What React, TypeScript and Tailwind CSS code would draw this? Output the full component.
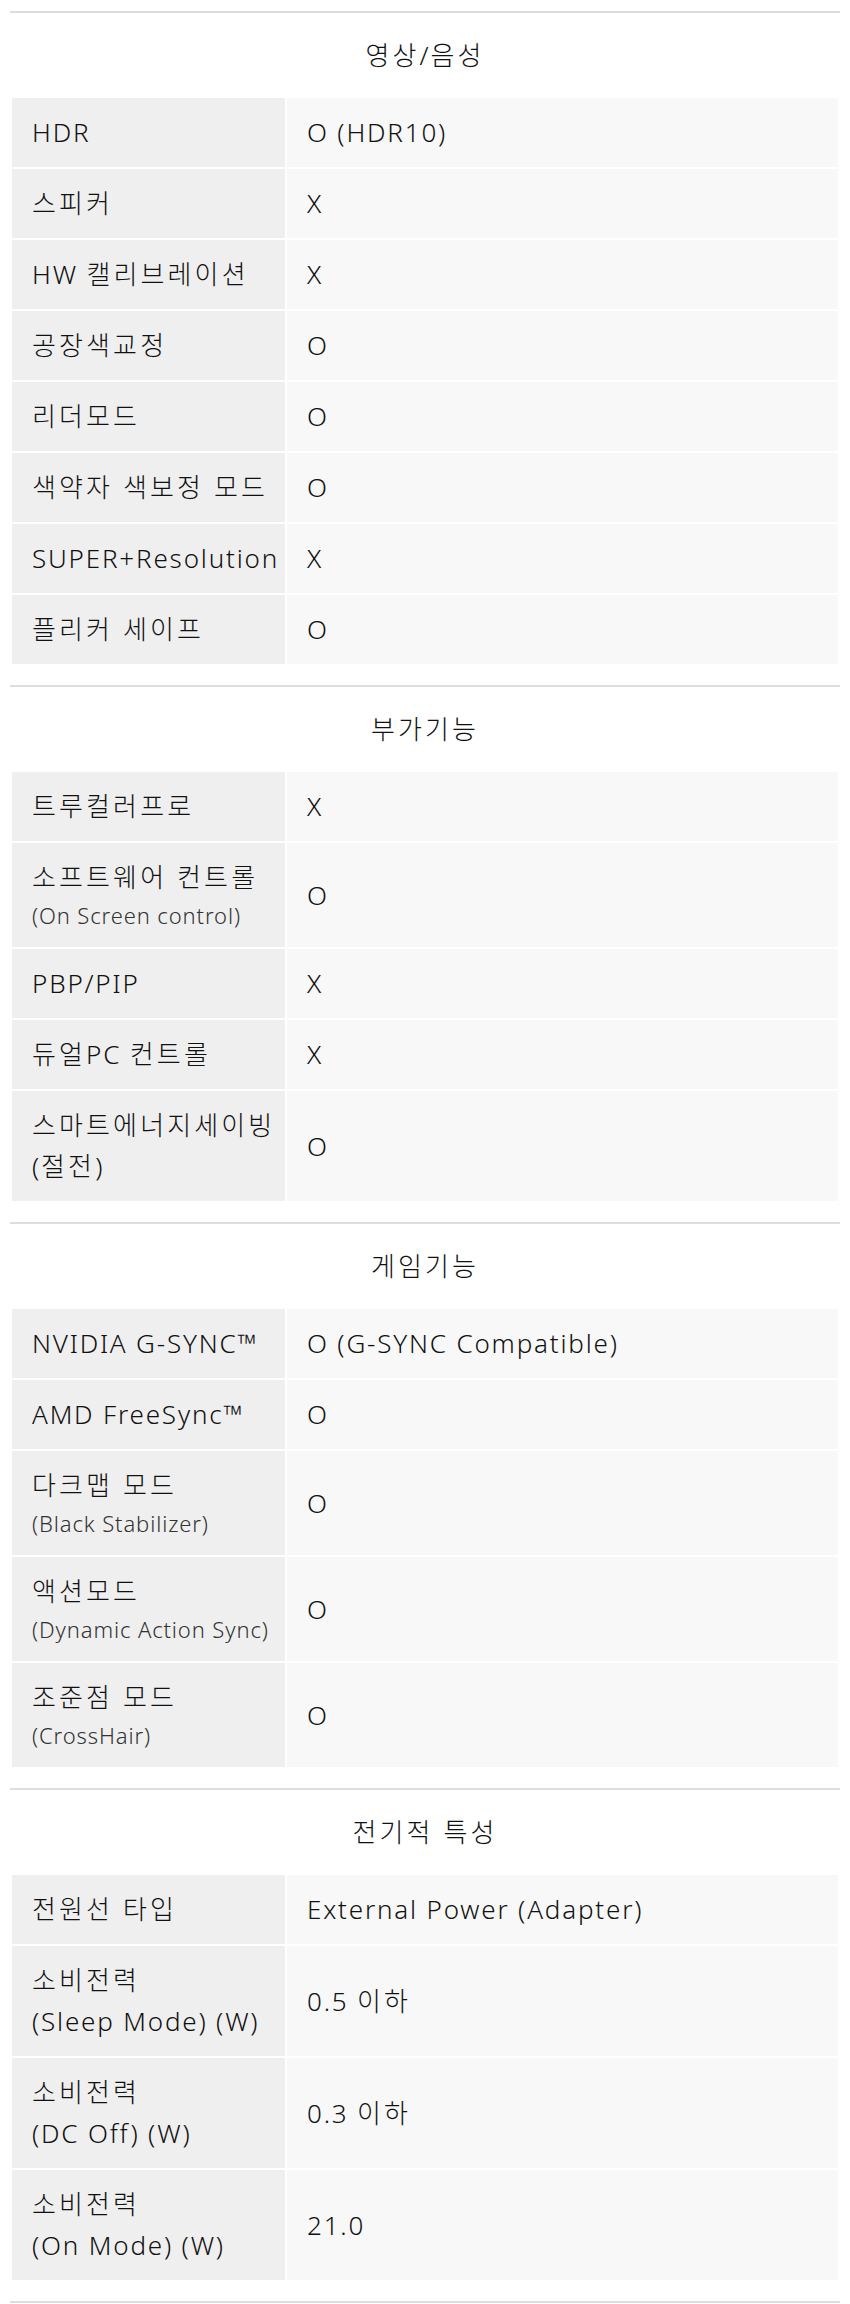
type Row = {
  label: string[];
  sub?: string;
  value: string;
};

type Section = {
  title: string;
  rows: Row[];
};

const sections: Section[] = [
  {
    title: "영상/음성",
    rows: [
      { label: ["HDR"], value: "O (HDR10)" },
      { label: ["스피커"], value: "X" },
      { label: ["HW 캘리브레이션"], value: "X" },
      { label: ["공장색교정"], value: "O" },
      { label: ["리더모드"], value: "O" },
      { label: ["색약자 색보정 모드"], value: "O" },
      { label: ["SUPER+Resolution"], value: "X" },
      { label: ["플리커 세이프"], value: "O" },
    ],
  },
  {
    title: "부가기능",
    rows: [
      { label: ["트루컬러프로"], value: "X" },
      { label: ["소프트웨어 컨트롤"], sub: "(On Screen control)", value: "O" },
      { label: ["PBP/PIP"], value: "X" },
      { label: ["듀얼PC 컨트롤"], value: "X" },
      { label: ["스마트에너지세이빙", "(절전)"], value: "O" },
    ],
  },
  {
    title: "게임기능",
    rows: [
      { label: ["NVIDIA G-SYNC™"], value: "O (G-SYNC Compatible)" },
      { label: ["AMD FreeSync™"], value: "O" },
      { label: ["다크맵 모드"], sub: "(Black Stabilizer)", value: "O" },
      { label: ["액션모드"], sub: "(Dynamic Action Sync)", value: "O" },
      { label: ["조준점 모드"], sub: "(CrossHair)", value: "O" },
    ],
  },
  {
    title: "전기적 특성",
    rows: [
      { label: ["전원선 타입"], value: "External Power (Adapter)" },
      { label: ["소비전력", "(Sleep Mode) (W)"], value: "0.5 이하" },
      { label: ["소비전력", "(DC Off) (W)"], value: "0.3 이하" },
      { label: ["소비전력", "(On Mode) (W)"], value: "21.0" },
    ],
  },
];

const Txt = ({ text }: { text: string }) => {
  const parts = text.split(/([\uAC00-\uD7A3]+(?:\s+[\uAC00-\uD7A3]+)*)/);
  return (
    <>
      {parts.map((part, i) =>
        /[\uAC00-\uD7A3]/.test(part) ? (
          <span key={i} className="tracking-[0.12em]">
            {part}
          </span>
        ) : (
          <span key={i}>{part}</span>
        )
      )}
    </>
  );
};

const SpecRow = ({ row }: { row: Row }) => {
  return (
    <>
      <div className="bg-[#efefef] pl-[20px] pr-[2px] py-[14px]">
        {row.label.map((line) => (
          <div key={line} className="whitespace-nowrap leading-[41px]">
            <Txt text={line} />
          </div>
        ))}
        {row.sub && (
          <div className="whitespace-nowrap text-[22px] leading-[35px] text-[#333] tracking-[0.04em]">
            {row.sub}
          </div>
        )}
      </div>
      <div className="flex items-center bg-[#f8f8f8] px-[20px]">
        <span>
          <Txt text={row.value} />
        </span>
      </div>
    </>
  );
};

export default function App() {
  return (
    <div
      className="min-h-[2304px] bg-white px-[10px] pt-[11px] text-[26px] font-light text-[#111] tracking-[0.07em]"
      style={{ fontFamily: '"Noto Sans", "Noto Sans CJK KR", sans-serif' }}
    >
      {sections.map((section) => (
        <section key={section.title} className="border-t-2 border-[#dddddd] pb-[21px]">
          <h2 className="py-[24px] text-center text-[26px] font-light leading-[37px]">
            <Txt text={section.title} />
          </h2>
          <div className="mx-[2px] grid grid-cols-[273px_1fr] gap-[2px]">
            {section.rows.map((row) => (
              <SpecRow key={row.label.join("") + row.value} row={row} />
            ))}
          </div>
        </section>
      ))}
      <div className="border-t-2 border-[#dddddd]" />
    </div>
  );
}
